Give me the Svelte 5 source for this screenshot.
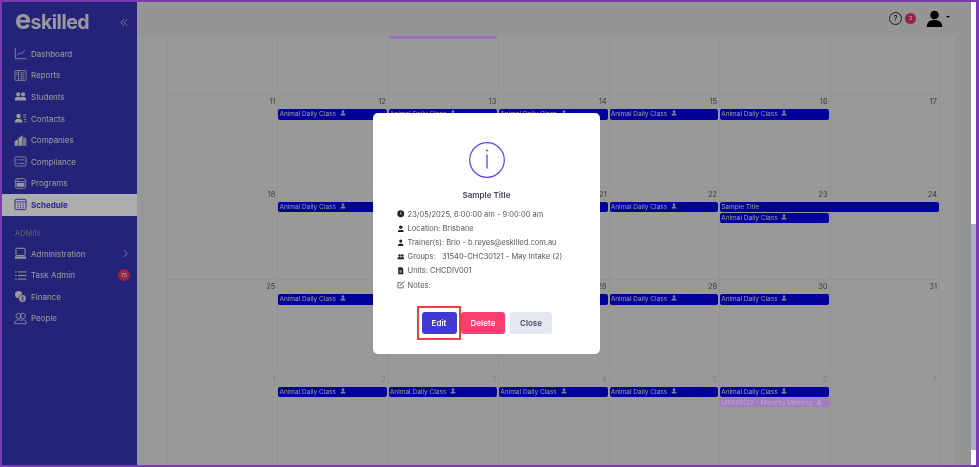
<script>
  const nav = [
    { label: "Dashboard", icon: "chart" },
    { label: "Reports", icon: "report" },
    { label: "Students", icon: "students" },
    { label: "Contacts", icon: "contacts" },
    { label: "Companies", icon: "companies" },
    { label: "Compliance", icon: "compliance" },
    { label: "Programs", icon: "programs" },
    { label: "Schedule", icon: "schedule", active: true }
  ];
  const admin = [
    { label: "Administration", icon: "laptop", arrow: true },
    { label: "Task Admin", icon: "list", badge: "75" },
    { label: "Finance", icon: "coins" },
    { label: "People", icon: "people" }
  ];
  const animal = { title: "Animal Daily Class", person: true };
  const weekEvents = [2, 3, 4, 5, 6].map((start) => ({ ...animal, start, span: 1 }));
  const weeks = [
    { days: ["", "", "", "", "", "", ""], events: [] },
    { days: [11, 12, 13, 14, 15, 16, 17], events: weekEvents },
    {
      days: [18, 19, 20, 21, 22, 23, 24],
      events: [
        ...weekEvents.slice(0, 4),
        { title: "Sample Title", start: 6, span: 2 },
        { ...animal, start: 6, span: 1 }
      ]
    },
    { days: [25, 26, 27, 28, 29, 30, 31], events: weekEvents },
    {
      days: [1, 2, 3, 4, 5, 6, 7],
      muted: true,
      events: [
        ...weekEvents,
        { title: "MSF40122 - Monthly Meeting", person: true, start: 6, span: 1, light: true }
      ]
    }
  ];
</script>

{#snippet navIcon(name)}
  <svg class="nav-icon" viewBox="0 0 20 20" fill="none" stroke="currentColor" stroke-width="1.2">
    {#if name === "chart"}
      <path d="M2 1v17h17M5 13l4-4 2 2 6-6" />
    {:else if name === "report"}
      <rect x="1.5" y="2.5" width="17" height="15" rx="1" /><path d="M7 2.5v15M9.5 6h6.5M9.5 9h6.5M9.5 12h6.5M9.5 15h6.5M3 6h2.500M3 9h2.500" />
    {:else if name === "students"}
      <g fill="currentColor" stroke="none"><circle cx="6.500" cy="6.500" r="3.200" /><circle cx="14" cy="6.500" r="3.200" /><path d="M1 16c0-4 2.500-5.500 5.500-5.500 2 0 3 .6 3.500 1 .6-.4 1.800-1 4-1 3 0 5 1.500 5 5.500z" /></g>
    {:else if name === "contacts"}
      <g fill="currentColor" stroke="none"><circle cx="7" cy="6" r="3.500" /><path d="M1 16c0-4 2.500-5.500 6-5.500s6 1.500 6 5.500z" /></g><path d="M13.500 4.500H19M14.500 8H19M15 11.500h4M15.500 15H19" />
    {:else if name === "companies"}
      <g fill="currentColor" stroke="none"><path d="M1 18v-7l5-3v10zM7 18V6l6-4v16z" /><path d="M14 18V5l5 1.500V18z" opacity=".75" /></g>
    {:else if name === "compliance"}
      <rect x="1.500" y="3" width="17" height="14" rx="2" /><path d="M4 7l1 1 1.500-1.500M4 12.500l1 1 1.500-1.500M8.500 7.500H16M8.500 13H16" />
    {:else if name === "programs"}
      <rect x="2" y="2.500" width="16" height="15" rx="3" /><path d="M2 7h16M6 2.500V7" /><rect x="4" y="9" width="12" height="6" fill="currentColor" stroke="none" />
    {:else if name === "schedule"}
      <rect x="1.500" y="2" width="17" height="16" rx="2" stroke-width="1.500" /><path d="M1.500 6h17" /><path d="M5 9h2M9 9h2M13 9h2M5 12h2M9 12h2M13 12h2M5 15h2M9 15h2M13 15h2" stroke-width="1.500" />
    {:else if name === "laptop"}
      <rect x="3" y="2" width="14" height="11" rx="1" stroke-width="1.500" /><path d="M1.500 14.500h17V18h-17z" fill="currentColor" stroke="none" />
    {:else if name === "list"}
      <path d="M6 4.500h13M6 10h13M6 15.500h13" stroke-width="1.500" /><path d="M2 4.500h2M2 10h2M2 15.500h2" stroke-width="1.800" />
    {:else if name === "coins"}
      <circle cx="7" cy="7" r="5.500" fill="currentColor" stroke="none" /><circle cx="13" cy="13" r="5.800" fill="currentColor" stroke="#3e39cb" stroke-width=".8" /><path d="M15 11c-1-1-3.500-.8-3.500.6 0 1.600 3.500.9 3.500 2.600 0 1.400-2.500 1.400-3.700.5M13.200 9.500v7" stroke="#3e39cb" stroke-width=".8" />
    {:else if name === "people"}
      <circle cx="7" cy="6" r="4" /><circle cx="13.500" cy="6" r="4" /><path d="M1 18c0-4 2.500-6 6-6 2 0 3 .6 3.500 1.200.6-.6 1.800-1.200 3.500-1.200 3.500 0 5 2 5 6z" />
    {/if}
  </svg>
{/snippet}

{#snippet person(cls)}
  <svg class={cls} viewBox="0 0 12 12" fill="currentColor"><circle cx="6" cy="3.300" r="2.600" /><path d="M1 11c0-3 2-4.300 5-4.300s5 1.300 5 4.300z" /></svg>
{/snippet}

<div class="frame">
  <aside class="sidebar">
    <div class="brand">
      <span class="logo"><span class="logo-e">e</span>skilled</span>
      <svg class="collapse" viewBox="0 0 10 10" fill="none" stroke="currentColor" stroke-width="1"><path d="M5 1L1 5l4 4M9 1L5 5l4 4" /></svg>
    </div>
    <nav>
      {#each nav as item}
        <div class="nav-item" class:active={item.active}>
          {@render navIcon(item.icon)}
          <span>{item.label}</span>
        </div>
      {/each}
      <div class="section">ADMIN</div>
      {#each admin as item}
        <div class="nav-item">
          {@render navIcon(item.icon)}
          <span>{item.label}</span>
          {#if item.arrow}
            <svg class="chevron" viewBox="0 0 6 10" fill="none" stroke="currentColor" stroke-width="1"><path d="M1 1l4 4-4 4" /></svg>
          {/if}
          {#if item.badge}<b class="nav-badge">{item.badge}</b>{/if}
        </div>
      {/each}
    </nav>
  </aside>

  <main class="main">
    <header class="topbar">
      <span class="help">?</span>
      <b class="alert">3</b>
      <svg class="avatar" viewBox="0 0 24 24" fill="currentColor"><circle cx="12" cy="7" r="6" /><path d="M1 24c0-7 4-10 11-10s11 3 11 10z" /></svg>
      <span class="caret"></span>
    </header>
    <div class="content">
      <div class="strip"></div>
      <div class="calendar">
        {#each weeks as week, w}
          <div class="week" class:first={w === 0}>
            {#each week.days as day}
              <div class="day" class:muted={week.muted}>{day}</div>
            {/each}
            <div class="events">
              {#if w === 0}
                <div class="event cut" style="grid-column: 3 / span 1"></div>
              {/if}
              {#each week.events as ev}
                <div class="event" class:light={ev.light} style="grid-column: {ev.start} / span {ev.span}">
                  {ev.title}
                  {#if ev.person}{@render person("ev-person")}{/if}
                </div>
              {/each}
            </div>
          </div>
        {/each}
      </div>
      <div class="strip right"></div>
    </div>
  </main>

  <div class="backdrop"></div>
  <div class="scrollbar"><div class="thumb"></div></div>

  <div class="modal" role="dialog">
    <svg class="info" viewBox="0 0 36 36" fill="none" stroke="#6a3de8" stroke-width="1.200">
      <circle cx="18" cy="18" r="17.300" />
      <path d="M18 12.500v14" stroke-width="1.300" />
      <circle cx="18" cy="8.500" r="1" fill="#6a3de8" stroke="none" />
    </svg>
    <h2>Sample Title</h2>
    <ul>
      <li>
        <svg viewBox="0 0 12 12"><circle cx="6" cy="6" r="5.500" fill="#222" /><path d="M6 3v3.300l2 1.200" stroke="#fff" fill="none" /></svg>
        23/05/2025, 6:00:00 am - 9:00:00 am
      </li>
      <li>
        <svg viewBox="0 0 12 12" fill="#222"><circle cx="6" cy="3.500" r="2.800" /><path d="M2.500 8h7L11 11.500H1z" /></svg>
        Location: Brisbane
      </li>
      <li>
        <svg viewBox="0 0 12 12" fill="#222"><circle cx="6" cy="3.300" r="2.500" /><path d="M1.500 11c0-3 2-4 4.500-4s4.500 1 4.500 4z" /></svg>
        Trainer(s): Brio - b.reyes@eskilled.com.au
      </li>
      <li>
        <svg viewBox="0 0 12 12" fill="#222"><circle cx="4" cy="4" r="2" /><circle cx="8.500" cy="4" r="2" /><path d="M.5 10c0-2.500 1.500-3.500 3.500-3.500S6 7 6.300 7.500c.4-.5 1-1 2.200-1 2 0 3 1 3 3.500z" /></svg>
        Groups: &nbsp; 31540-CHC30121 - May Intake (2)
      </li>
      <li>
        <svg viewBox="0 0 12 12" fill="#222"><path d="M2 .5h5.500L10 3v8.500H2z" /><path d="M4 6h4M4 8h4" stroke="#fff" /></svg>
        Units: CHCDIV001
      </li>
      <li>
        <svg viewBox="0 0 12 12" fill="none" stroke="#222"><path d="M10 6.500v4.500H1.500V2.500H6" /><path d="M4.500 7.500L11 1" stroke-width="1.500" /></svg>
        Notes:
      </li>
    </ul>
    <div class="actions">
      <span class="edit-wrap"><button class="btn edit">Edit</button></span>
      <button class="btn delete">Delete</button>
      <button class="btn close">Close</button>
    </div>
  </div>
</div>

<style>
  :global(body) {
    margin: 0;
    overflow: hidden;
  }

  .frame {
    position: relative;
    width: 979px;
    height: 467px;
    box-sizing: border-box;
    display: flex;
    background: #fff;
    font-family: Inter, "Open Sans", sans-serif;
    color: #333;
    overflow: hidden;
    filter: blur(0.35px);
  }

  .frame::after {
    content: "";
    position: absolute;
    inset: 0;
    border: 2px solid #7a3ab0;
    border-right-width: 3px;
    pointer-events: none;
    z-index: 5;
  }

  .sidebar {
    width: 137px;
    flex: none;
    background: #3e39cb;
    color: #fff;
    box-sizing: border-box;
    padding: 2px 0 0 2px;
  }

  .brand {
    height: 41px;
    display: flex;
    align-items: center;
    padding-left: 13px;
  }

  .logo {
    font-size: 19.500px;
    font-weight: 700;
    letter-spacing: -0.5px;
    color: #fff;
    line-height: 1;
  }

  .logo-e {
    font-size: 27px;
    line-height: 16px;
  }

  .collapse {
    width: 8px;
    height: 9px;
    margin-left: auto;
    margin-right: 9px;
  }

  .nav-item {
    height: 21.600px;
    display: flex;
    align-items: center;
    padding-left: 12px;
    font-size: 8px;
    gap: 4px;
    position: relative;
  }

  .nav-item.active {
    background: #adadad;
    color: #2a2690;
    font-weight: 700;
    z-index: 4;
  }

  .nav-icon {
    width: 13px;
    height: 13px;
    flex: none;
  }

  .section {
    font-size: 7px;
    letter-spacing: 0.4px;
    color: #aaa;
    padding: 13px 0 4px 13px;
    line-height: 10px;
  }

  .chevron {
    width: 5px;
    height: 9px;
    position: absolute;
    right: 9px;
    top: 6px;
  }

  .nav-badge {
    position: absolute;
    right: 7px;
    top: 5px;
    width: 12px;
    height: 12px;
    border-radius: 50%;
    background: #ff3870;
    color: #fff;
    font-size: 5px;
    line-height: 12px;
    text-align: center;
  }

  .main {
    flex: 1;
    min-width: 0;
    display: flex;
    flex-direction: column;
  }

  .topbar {
    height: 36px;
    padding-top: 0;
    flex: none;
    display: flex;
    align-items: center;
    justify-content: flex-end;
    padding-right: 29px;
    background: #f8f8f8;
    color: #111;
  }

  .help {
    width: 11px;
    height: 11px;
    border: 1px solid #333;
    border-radius: 50%;
    font-size: 8px;
    line-height: 11px;
    text-align: center;
    margin-right: 3px;
  }

  .alert {
    width: 11px;
    height: 11px;
    border-radius: 50%;
    background: #ff3870;
    color: #fff;
    font-size: 5px;
    line-height: 11px;
    text-align: center;
    margin-right: 10px;
  }

  .avatar {
    width: 17px;
    height: 17px;
    color: #000;
  }

  .caret {
    width: 0;
    height: 0;
    border: 2px solid transparent;
    border-top-color: #000;
    border-bottom: 0;
    margin-left: 3px;
    margin-bottom: 2px;
  }

  .content {
    flex: 1;
    display: flex;
    min-height: 0;
    background: #fff;
  }

  .strip {
    width: 15px;
    flex: none;
    background: #fcfdff;
    margin-right: 15px;
  }

  .strip.right {
    width: 16px;
    margin: 0 0 0 15px;
    background: #f5f8f9;
  }

  .calendar {
    width: 773px;
    flex: none;
  }

  .week {
    position: relative;
    height: 92.500px;
    display: grid;
    grid-template-columns: repeat(7, 1fr);
    border-bottom: 1px solid #f6f6f6;
    box-sizing: border-box;
  }

  .week.first {
    height: 59px;
  }

  .day {
    border-left: 1px solid #f6f6f6;
    text-align: right;
    padding: 2px 2px 0 0;
    font-size: 7.500px;
    color: #666;
  }

  .day:nth-child(7) {
    border-right: 1px solid #f6f6f6;
  }

  .day.muted {
    color: #d5d5d5;
  }

  .events {
    position: absolute;
    inset: 14px 0 0 0;
    display: grid;
    grid-template-columns: repeat(7, 1fr);
    grid-auto-rows: 11.300px;
    align-content: start;
  }

  .week.first .events {
    inset: 0;
    grid-auto-rows: 2px;
  }

  .event {
    margin: 0 1px;
    height: 10.500px;
    background: #0000ff;
    color: #fff;
    border-radius: 2px;
    font-size: 6.500px;
    line-height: 10.500px;
    padding-left: 1px;
    white-space: nowrap;
    overflow: hidden;
  }

  .event.cut {
    height: 2.500px;
    background: #9a72bc;
    border-radius: 0 0 2px 2px;
    position: relative;
    z-index: 4;
  }

  .event.light {
    background: #a27cbc;
    color: #bda5cf;
    height: 9.500px;
    position: relative;
    z-index: 4;
  }

  .ev-person {
    width: 6px;
    height: 6px;
    margin-left: 2px;
    opacity: 0.85;
  }

  .scrollbar {
    position: absolute;
    right: 0;
    top: 0;
    bottom: 0;
    width: 8px;
    background: #f8f9ff;
    z-index: 4;
  }

  .thumb {
    height: 226px;
    margin-top: 224px;
    background: #a9adc6;
  }

  .backdrop {
    position: absolute;
    inset: 0;
    background: rgba(0, 0, 0, 0.4);
    z-index: 3;
  }

  .modal {
    position: absolute;
    left: 373px;
    top: 113px;
    width: 227px;
    height: 241px;
    box-sizing: border-box;
    background: #fff;
    border-radius: 5px;
    z-index: 4;
    display: flex;
    flex-direction: column;
    align-items: center;
    padding-top: 29px;
  }

  .info {
    width: 36px;
    height: 36px;
    flex: none;
  }

  h2 {
    margin: 11px 0 0;
    font-size: 8px;
    line-height: 12px;
    font-weight: 600;
    color: #45485c;
  }

  ul {
    list-style: none;
    align-self: stretch;
    margin: 6px 0 0;
    padding: 0 0 0 24px;
    font-size: 7.500px;
    color: #555;
  }

  li {
    height: 14.200px;
    display: flex;
    align-items: center;
    gap: 1px;
    white-space: pre-wrap;
  }

  li svg {
    width: 7.500px;
    height: 7.500px;
    flex: none;
  }

  .actions {
    display: flex;
    margin: 14px 4px 0 0;
    align-items: center;
  }

  .edit-wrap {
    padding: 4px 2.500px;
    border: 2px solid #e9423a;
    display: flex;
  }

  .btn {
    height: 22px;
    border: 0;
    border-radius: 3px;
    font: 600 8px Inter, "Open Sans", sans-serif;
    padding: 0;
  }

  .edit {
    width: 35px;
    background: #3f3bd1;
    color: #fff;
  }

  .delete {
    width: 44px;
    background: #f83e70;
    color: #fff;
  }

  .close {
    width: 42px;
    margin-left: 5px;
    background: #e5e7f0;
    color: #45485c;
  }
</style>
